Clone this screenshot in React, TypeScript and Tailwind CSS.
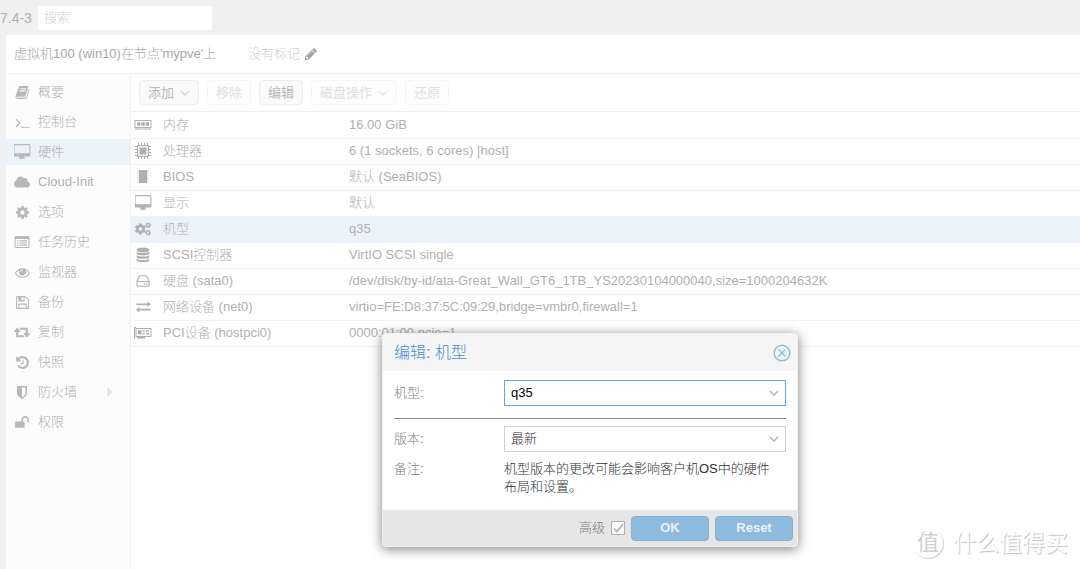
import React from "react";
import { FaCloud, FaCogs } from "react-icons/fa";

type IconProps = { d: string; box?: string; className?: string };

function Glyph({ d, box = "0 0 1792 1792", className = "size-4" }: IconProps) {
  return (
    <svg viewBox={box} className={className} fill="currentColor" aria-hidden="true">
      <path d={d} />
    </svg>
  );
}

const BOOK =
  "M1703 478q40 57 18 129l-275 906q-19 64-76.5 107.5t-122.5 43.5h-923q-77 0-148.5-53.5t-99.5-131.5q-24-67-2-127 0-4 3-27t4-37q1-8-3-21.5t-3-19.5q2-11 8-21t16.5-23.5 16.5-23.5q23-38 45-91.5t30-91.5q3-10 .5-30t-.5-28q3-11 17-28t17-23q21-36 42-92t25-90q1-9-2.5-32t.5-28q4-13 22-30.5t22-22.5q19-26 42.5-84.5t27.5-96.5q1-8-3-25.5t-2-26.5q2-8 9-18t18-23 17-21q8-12 16.5-30.5t15-35 16-36 19.5-32 26.5-23.5 36-11.5 47.5 5.5l-1 3q38-9 51-9h761q74 0 114 56t18 130l-274 906q-36 119-71.5 153.5t-128.5 34.5h-869q-27 0-38 15-11 16-1 43 24 70 144 70h923q29 0 56-15.5t35-41.5l300-987q7-22 5-57 38 15 59 43zm-1064 2q-4 13 2 22.5t20 9.5h608q13 0 25.5-9.5t16.5-22.5l21-64q4-13-2-22.5t-20-9.5h-608q-13 0-25.5 9.5t-16.5 22.5zm-83 256q-4 13 2 22.5t20 9.5h608q13 0 25.5-9.5t16.5-22.5l21-64q4-13-2-22.5t-20-9.5h-608q-13 0-25.5 9.5t-16.5 22.5z";
const PENCIL =
  "M491 1536l91-91-235-235-91 91v107h128v128h107zm523-928q0-22-22-22-10 0-17 7l-542 542q-7 7-7 17 0 22 22 22 10 0 17-7l542-542q7-7 7-17zm-54-192l416 416-832 832h-416v-416zm683 96q0 53-37 90l-166 166-416-416 166-165q36-38 90-38 53 0 91 38l235 234q37 39 37 91z";
const TERMINAL =
  "M649 983l-466 466q-10 10-23 10t-23-10l-50-50q-10-10-10-23t10-23l393-393-393-393q-10-10-10-23t10-23l50-50q10-10 23-10t23 10l466 466q10 10 10 23t-10 23zm1079 457v64q0 14-9 23t-23 9h-960q-14 0-23-9t-9-23v-64q0-14 9-23t23-9h960q14 0 23 9t9 23z";
const DESKTOP =
  "M1728 992v-832q0-13-9.5-22.5t-22.5-9.5h-1600q-13 0-22.5 9.5t-9.5 22.5v832q0 13 9.5 22.5t22.5 9.5h1600q13 0 22.5-9.5t9.5-22.5zm128-832v1088q0 66-47 113t-113 47h-544q0 37 16 77.5t32 71 16 43.5q0 26-19 45t-45 19h-512q-26 0-45-19t-19-45q0-14 16-44t32-70 16-78h-544q-66 0-113-47t-47-113v-1088q0-66 47-113t113-47h1600q66 0 113 47t47 113z";
const COG =
  "M1152 896q0-106-75-181t-181-75-181 75-75 181 75 181 181 75 181-75 75-181zm512-109v222q0 12-8 23t-20 13l-185 28q-19 54-39 91 35 50 107 138 10 12 10 25t-9 23q-27 37-99 108t-94 71q-12 0-26-9l-138-108q-44 23-91 38-16 136-29 186-7 28-36 28h-222q-14 0-24.5-8.5t-11.5-21.5l-28-184q-49-16-90-37l-141 107q-10 9-25 9-14 0-25-11-126-114-165-168-7-10-7-23 0-12 8-23 15-21 51-66.5t54-70.5q-27-50-41-99l-183-27q-13-2-21-12.5t-8-23.5v-222q0-12 8-23t19-13l186-28q14-46 39-92-40-57-107-138-10-12-10-24 0-10 9-23 26-36 98.5-107.5t94.5-71.5q13 0 26 10l138 107q44-23 91-38 16-136 29-186 7-28 36-28h222q14 0 24.5 8.5t11.5 21.5l28 184q49 16 90 37l142-107q9-9 24-9 13 0 25 10 129 119 165 170 7 8 7 22 0 12-8 23-15 21-51 66.5t-54 70.5q26 50 41 98l183 28q13 2 21 12.5t8 23.5z";
const EYE =
  "M1664 960q-152-236-381-353 61 104 61 225 0 185-131.5 316.5t-316.5 131.5-316.5-131.5-131.5-316.5q0-121 61-225-229 117-381 353 133 205 333.5 326.5t434.5 121.5 434.5-121.5 333.5-326.5zm-720-384q0-20-14-34t-34-14q-125 0-214.5 89.5t-89.5 214.5q0 20 14 34t34 14 34-14 14-34q0-86 61-147t147-61q20 0 34-14t14-34zm848 384q0 34-20 69-140 230-376.5 368.5t-499.5 138.5-499.5-139-376.5-368q-20-35-20-69t20-69q140-229 376.5-368t499.5-139 499.5 139 376.5 368q20 35 20 69z";
const FLOPPY =
  "M512 1536h768v-384h-768v384zm896 0h128v-896q0-14-10-38.5t-20-34.5l-281-281q-10-10-34-20t-39-10v416q0 40-28 68t-68 28h-576q-40 0-68-28t-28-68v-416h-128v1280h128v-416q0-40 28-68t68-28h832q40 0 68 28t28 68v416zm-384-928v-320q0-13-9.5-22.5t-22.5-9.5h-192q-13 0-22.5 9.5t-9.5 22.5v320q0 13 9.5 22.5t22.5 9.5h192q13 0 22.5-9.5t9.5-22.5zm640 32v928q0 40-28 68t-68 28h-1344q-40 0-68-28t-28-68v-1344q0-40 28-68t68-28h928q40 0 88 20t76 48l280 280q28 28 48 76t20 88z";
const RETWEET =
  "M1280 1504q0 13-9.5 22.5t-22.5 9.5h-960q-8 0-13.5-2t-9-7-5.5-8-3-11.5-1-11.5v-600h-192q-26 0-45-19t-19-45q0-24 15-41l320-384q19-22 49-22t49 22l320 384q15 17 15 41 0 26-19 45t-45 19h-192v384h576q16 0 25 11l160 192q7 10 7 21zm640-416q0 24-15 41l-320 384q-20 23-49 23t-49-23l-320-384q-15-17-15-41 0-26 19-45t45-19h192v-384h-576q-16 0-25-12l-160-192q-7-9-7-20 0-13 9.5-22.5t22.5-9.5h960q8 0 13.5 2t9 7 5.5 8 3 11.5 1 11.5v600h192q26 0 45 19t19 45z";
const HISTORY =
  "M1664 896q0 156-61 298t-164 245-245 164-298 61q-172 0-327-72.5t-264-204.5q-7-10-6.5-22.5t8.5-20.5l137-138q10-9 25-9 16 2 23 12 73 95 179 147t225 52q104 0 198.5-40.5t163.5-109.5 109.5-163.5 40.5-198.5-40.5-198.5-109.5-163.5-163.5-109.5-198.5-40.5q-98 0-188 35.5t-160 101.5l137 138q31 30 14 69-17 40-59 40h-448q-26 0-45-19t-19-45v-448q0-42 40-59 39-17 69 14l130 129q107-101 244.5-156.5t284.5-55.5q156 0 298 61t245 164 164 245 61 298zm-640-288v448q0 14-9 23t-23 9h-320q-14 0-23-9t-9-23v-64q0-14 9-23t23-9h224v-352q0-14 9-23t23-9h64q14 0 23 9t9 23z";
const UNLOCK =
  "M1664 576v256q0 26-19 45t-45 19h-64q-26 0-45-19t-19-45v-256q0-106-75-181t-181-75-181 75-75 181v192h96q40 0 68 28t28 68v576q0 40-28 68t-68 28h-960q-40 0-68-28t-28-68v-576q0-40 28-68t68-28h672v-192q0-185 131.5-316.5t316.5-131.5 316.5 131.5 131.5 316.5z";

function Draw({ children }: { children: React.ReactNode }) {
  return (
    <svg viewBox="0 0 18 18" className="size-[18px]" fill="currentColor" aria-hidden="true">
      {children}
    </svg>
  );
}

const listIcon = (
  <Draw>
    <path
      fillRule="evenodd"
      d="M3 3h12a1.500 1.500 0 0 1 1.500 1.500v9a1.500 1.500 0 0 1-1.500 1.500H3a1.500 1.500 0 0 1-1.500-1.500v-9A1.500 1.500 0 0 1 3 3zM2.600 6v7.500q0 .4.4.4h12q.4 0 .4-.4V6z"
    />
    <path d="M4 7.200h1.300v1.200H4zM6.500 7.200H14v1.200H6.500zM4 9.400h1.300v1.200H4zM6.500 9.400H14v1.200H6.500zM4 11.600h1.300v1.200H4zM6.500 11.600H14v1.200H6.500z" />
  </Draw>
);

const shieldIcon = (
  <Draw>
    <path
      fillRule="evenodd"
      d="M4 3h10v7c0 2.800-2.300 4.600-5 6-2.700-1.400-5-3.200-5-6zM9 4.600v9.600c2-1.200 3.500-2.500 3.500-4.200V4.600z"
    />
  </Draw>
);

const memoryIcon = (
  <Draw>
    <path fillRule="evenodd" d="M.5 4h17v8H.5zM1.500 5v6h15V5z" />
    <path d="M3 6.200h3.400v3.600H3zM7.300 6.200h3.400v3.600H7.300zM11.600 6.200H15v3.600h-3.400zM1.500 12h1v2h-1zM3.500 12h1v2h-1zM5.500 12h1v2h-1zM7.500 12h1v1.500h-1zM9.500 12h1v2h-1zM11.500 12h1v2h-1zM13.500 12h1v2h-1zM15.500 12h1v2h-1z" />
  </Draw>
);

const cpuIcon = (
  <Draw>
    <path fillRule="evenodd" d="M3 3h12v12H3zM4.200 4.200v9.600h9.600V4.200z" />
    <path d="M5.500 5.500h7v7h-7z" />
    <path
      stroke="currentColor"
      strokeWidth="1"
      fill="none"
      d="M4.500 1v2M7.500 1v2M10.500 1v2M13.500 1v2M4.500 15v2M7.500 15v2M10.500 15v2M13.500 15v2M1 4.500h2M1 7.500h2M1 10.500h2M1 13.500h2M15 4.500h2M15 7.500h2M15 10.500h2M15 13.500h2"
    />
  </Draw>
);

const biosIcon = (
  <Draw>
    <path d="M5 2h8v13H5z" />
    <path
      stroke="currentColor"
      strokeWidth="1"
      strokeOpacity=".5"
      d="M3.500 3.500h11M3.500 5.500h11M3.500 7.500h11M3.500 9.500h11M3.500 11.500h11M3.500 13.500h11"
    />
  </Draw>
);

const databaseIcon = (
  <Draw>
    <ellipse cx="9" cy="4" rx="6.300" ry="2.500" />
    <path d="M2.700 5.600c1.500 2 11.100 2 12.600 0v1.900c0 2.600-12.600 2.600-12.600 0zM2.700 9c1.500 2 11.100 2 12.600 0v1.900c0 2.600-12.600 2.600-12.600 0zM2.700 12.400c1.500 2 11.100 2 12.600 0v1.900c0 2.600-12.600 2.600-12.600 0z" />
  </Draw>
);

const diskIcon = (
  <Draw>
    <path
      fill="none"
      stroke="currentColor"
      strokeWidth="1.100"
      strokeLinejoin="round"
      d="M3 9.500 5 4.500q.3-.7 1-.7h6q.7 0 1 .7l2 5v4q0 .8-.8.8H3.800q-.8 0-.8-.8zM3 9.500h12"
    />
    <path d="M9.800 11.300h1.400v1.400H9.800zM12.200 11.300h1.400v1.400h-1.400z" />
  </Draw>
);

const exchangeIcon = (
  <Draw>
    <path d="M2.500 5.400h11V3.500l3.500 2.800-3.500 2.800V7.200h-11zM16.500 12.600h-11v1.900L2 11.700l3.500-2.800v1.900h11z" />
  </Draw>
);

const pciIcon = (
  <Draw>
    <path fillRule="evenodd" d="M1.500 4h16v9h-16zM2.500 5v7h14V5z" />
    <path d="M0 3h2v1.200H1V15H0zM4 6.200h3.500v4.300H4zM8.500 6.200h2.300v1.600H8.500zM12 6.200h3v1.600h-3zM8.500 9h2.300v1.500H8.500zM12 9h3v1.500h-3zM3 13h8v1.600H3z" />
  </Draw>
);

const desktopIcon = <Glyph d={DESKTOP} box="0 0 1920 1792" className="h-4 w-[17px]" />;

const menu: { label: string; icon: React.ReactNode; active?: boolean; more?: boolean }[] = [
  { label: "概要", icon: <Glyph d={BOOK} className="size-[15px]" /> },
  { label: "控制台", icon: <Glyph d={TERMINAL} className="size-[15px]" /> },
  { label: "硬件", icon: desktopIcon, active: true },
  { label: "Cloud-Init", icon: <FaCloud className="size-4" /> },
  { label: "选项", icon: <Glyph d={COG} className="size-[15px]" /> },
  { label: "任务历史", icon: listIcon },
  { label: "监视器", icon: <Glyph d={EYE} className="size-[15px]" /> },
  { label: "备份", icon: <Glyph d={FLOPPY} className="size-[15px]" /> },
  { label: "复制", icon: <Glyph d={RETWEET} box="0 0 1920 1792" className="size-4" /> },
  { label: "快照", icon: <Glyph d={HISTORY} className="size-[15px]" /> },
  { label: "防火墙", icon: shieldIcon, more: true },
  { label: "权限", icon: <Glyph d={UNLOCK} className="size-[15px]" /> },
];

const rows: { name: string; value: string; icon: React.ReactNode; active?: boolean }[] = [
  { name: "内存", value: "16.00 GiB", icon: memoryIcon },
  { name: "处理器", value: "6 (1 sockets, 6 cores) [host]", icon: cpuIcon },
  { name: "BIOS", value: "默认 (SeaBIOS)", icon: biosIcon },
  { name: "显示", value: "默认", icon: desktopIcon },
  { name: "机型", value: "q35", icon: <FaCogs className="size-4" />, active: true },
  { name: "SCSI控制器", value: "VirtIO SCSI single", icon: databaseIcon },
  {
    name: "硬盘 (sata0)",
    value: "/dev/disk/by-id/ata-Great_Wall_GT6_1TB_YS20230104000040,size=1000204632K",
    icon: diskIcon,
  },
  {
    name: "网络设备 (net0)",
    value: "virtio=FE:D8:37:5C:09:29,bridge=vmbr0,firewall=1",
    icon: exchangeIcon,
  },
  { name: "PCI设备 (hostpci0)", value: "0000:01:00,pcie=1", icon: pciIcon },
];

function Chevron({ className }: { className: string }) {
  return (
    <svg viewBox="0 0 10 6" className={className} fill="none" stroke="currentColor" aria-hidden="true">
      <path d="M1 1l4 4 4-4" strokeWidth="1.500" />
    </svg>
  );
}

function ToolButton({ label, menu, disabled }: { label: string; menu?: boolean; disabled?: boolean }) {
  return (
    <button
      type="button"
      disabled={disabled}
      className="flex h-[25px] items-center gap-1.5 rounded-sm border border-[#ededed] bg-[#fafafa] px-2 font-normal text-[#b8b8b8] disabled:border-[#f5f5f5] disabled:bg-[#fdfdfd] disabled:text-[#e0e0e0]"
    >
      {label}
      {menu && <Chevron className={disabled ? "h-1.5 w-2.5 text-[#e8e8e8]" : "h-1.5 w-2.5 text-[#d4d4d4]"} />}
    </button>
  );
}

function Combo({ id, value, focused }: { id: string; value: string; focused?: boolean }) {
  return (
    <div className="relative flex-1">
      <select
        id={id}
        defaultValue={value}
        className={
          focused
            ? "h-[26px] w-full appearance-none border border-[#5fa8dc] bg-white px-1.5 text-black outline-none"
            : "h-[26px] w-full appearance-none border border-[#d0d0d0] bg-white px-1.5 text-[#303030] outline-none"
        }
      >
        <option>{value}</option>
      </select>
      <Chevron className="pointer-events-none absolute top-2.5 right-[7px] h-1.5 w-2.5 text-[#b5b5b5]" />
    </div>
  );
}

function EditDialog() {
  return (
    <section
      role="dialog"
      aria-labelledby="dialog-title"
      className="absolute top-[333px] left-[382px] w-[416px] overflow-hidden rounded-[4px] border border-[#f0f0f0] bg-white shadow-[0_2px_12px_rgba(0,0,0,0.5)]"
    >
      <header className="flex h-[37px] items-center justify-between bg-[#f5f5f5] pr-1.5 pl-[11px]">
        <h2 id="dialog-title" className="text-base text-[#4a90cf]">
          编辑: 机型
        </h2>
        <button type="button" aria-label="关闭" className="text-[#8fbcdf]">
          <svg viewBox="0 0 18 18" className="size-[18px]" fill="none" stroke="currentColor">
            <circle cx="9" cy="9" r="7.800" strokeWidth="1.500" />
            <path d="M5.500 5.500l7 7M12.500 5.500l-7 7" strokeWidth="1.300" />
          </svg>
        </button>
      </header>
      <div className="px-[11px] pt-[9px] pb-3.5 text-[#808080]">
        <div className="flex items-center">
          <label htmlFor="machine" className="w-[110px]">
            机型:
          </label>
          <Combo id="machine" value="q35" focused />
        </div>
        <hr className="mt-3 mb-[7px] border-[#8c8c8c]" />
        <div className="flex items-center">
          <label htmlFor="version" className="w-[110px]">
            版本:
          </label>
          <Combo id="version" value="最新" />
        </div>
        <div className="mt-2 flex leading-[18px]">
          <span className="w-[110px]">备注:</span>
          <p className="flex-1 pr-3 text-[#303030]">机型版本的更改可能会影响客户机OS中的硬件布局和设置。</p>
        </div>
      </div>
      <footer className="flex h-9 items-center justify-end gap-1.5 bg-[#e6e6e6] pr-1 text-[#808080]">
        <label className="flex items-center gap-1.5">
          高级
          <span className="relative flex">
            <input
              type="checkbox"
              defaultChecked
              className="size-3.5 appearance-none border border-[#b0b0b0] bg-[#fbfbfb]"
            />
            <svg
              viewBox="0 0 14 14"
              className="pointer-events-none absolute inset-0 size-3.5 text-[#b0b0b0]"
              fill="none"
              stroke="currentColor"
              aria-hidden="true"
            >
              <path d="M3 7.500l3 3L12 3" strokeWidth="1.600" />
            </svg>
          </span>
        </label>
        <button type="button" className="h-[25px] w-[78px] rounded-sm border border-[#81b2d9] bg-[#8fbbdf] font-bold text-[#e8f1f8]">
          OK
        </button>
        <button type="button" className="h-[25px] w-[78px] rounded-sm border border-[#81b2d9] bg-[#8fbbdf] font-bold text-[#e8f1f8]">
          Reset
        </button>
      </footer>
    </section>
  );
}

export default function App() {
  return (
    <div className="relative flex min-h-screen flex-col overflow-hidden bg-[#f0f0f0] font-['Liberation_Sans','Noto_Sans_CJK_SC',sans-serif] text-[13px] font-light text-[#b0b0b0]">
      <header className="flex h-[35px] items-center gap-1.5">
        <span className="text-sm text-[#b0b0b0]">7.4-3</span>
        <input
          type="search"
          aria-label="搜索"
          placeholder="搜索"
          className="h-6 w-[174px] bg-white px-1.5 outline-none placeholder:text-[#d2d2d2]"
        />
      </header>
      <main className="ml-1.5 flex flex-1 flex-col bg-white">
        <div className="flex h-[39px] items-center border-b border-[#f2f2f2] pl-2">
          <h1 className="text-[#a8a8a8]">虚拟机100 (win10)在节点'mypve'上</h1>
          <span className="ml-8 text-[#d0d0d0]">没有标记</span>
          <button type="button" aria-label="编辑标记" className="ml-1 text-[#a4a4a4]">
            <Glyph d={PENCIL} className="size-3.5" />
          </button>
        </div>
        <div className="flex flex-1">
          <nav className="w-[125px] shrink-0 border-r border-[#f2f2f2] bg-[#fcfcfc] pt-[5px]">
            <ul className="flex flex-col gap-1">
              {menu.map((item) => (
                <li key={item.label}>
                  <a
                    href="#"
                    className={
                      item.active
                        ? "flex h-[26px] items-center bg-[#ebf3fa] pl-[7px]"
                        : "flex h-[26px] items-center pl-[7px]"
                    }
                  >
                    <span className="flex w-[18px] justify-center text-[#b8b8b8]">{item.icon}</span>
                    <span className="ml-[7px] flex-1">{item.label}</span>
                    {item.more && (
                      <svg viewBox="0 0 6 10" className="mr-[17px] h-2.5 w-1.5 text-[#e6e6e6]" fill="currentColor" aria-hidden="true">
                        <path d="M0 0l6 5-6 5z" />
                      </svg>
                    )}
                  </a>
                </li>
              ))}
            </ul>
          </nav>
          <div className="min-w-0 flex-1">
            <div className="flex h-[38px] items-center gap-2 border-b border-[#f0f0f0] pl-2">
              <ToolButton label="添加" menu />
              <ToolButton label="移除" disabled />
              <ToolButton label="编辑" />
              <ToolButton label="磁盘操作" menu disabled />
              <ToolButton label="还原" disabled />
            </div>
            <table className="w-full table-fixed text-left">
              <tbody>
                {rows.map((row) => (
                  <tr
                    key={row.name}
                    className={
                      row.active
                        ? "h-[26px] border-b border-[#ebf3fa] bg-[#ebf3fa]"
                        : "h-[26px] border-b border-[#f2f2f2]"
                    }
                  >
                    <th scope="row" className="w-[218px] p-0 font-light">
                      <span className="flex items-center pl-[3px]">
                        <span className="flex w-[18px] justify-center text-[#b0b0b0]">{row.icon}</span>
                        <span className="ml-[11px]">{row.name}</span>
                      </span>
                    </th>
                    <td className="p-0 whitespace-nowrap">{row.value}</td>
                  </tr>
                ))}
              </tbody>
            </table>
          </div>
        </div>
      </main>
      <EditDialog />
      <div className="absolute right-3 bottom-2.5 flex items-center gap-2.5 text-[23px] leading-8 font-normal text-white [text-shadow:1px_1px_1px_#c0c0c0]">
        <span className="flex size-[30px] items-center justify-center rounded-full text-[22px] text-[#d0d0d0] shadow-[1px_1px_1px_#cccccc] [text-shadow:none]">
          值
        </span>
        什么值得买
      </div>
    </div>
  );
}
